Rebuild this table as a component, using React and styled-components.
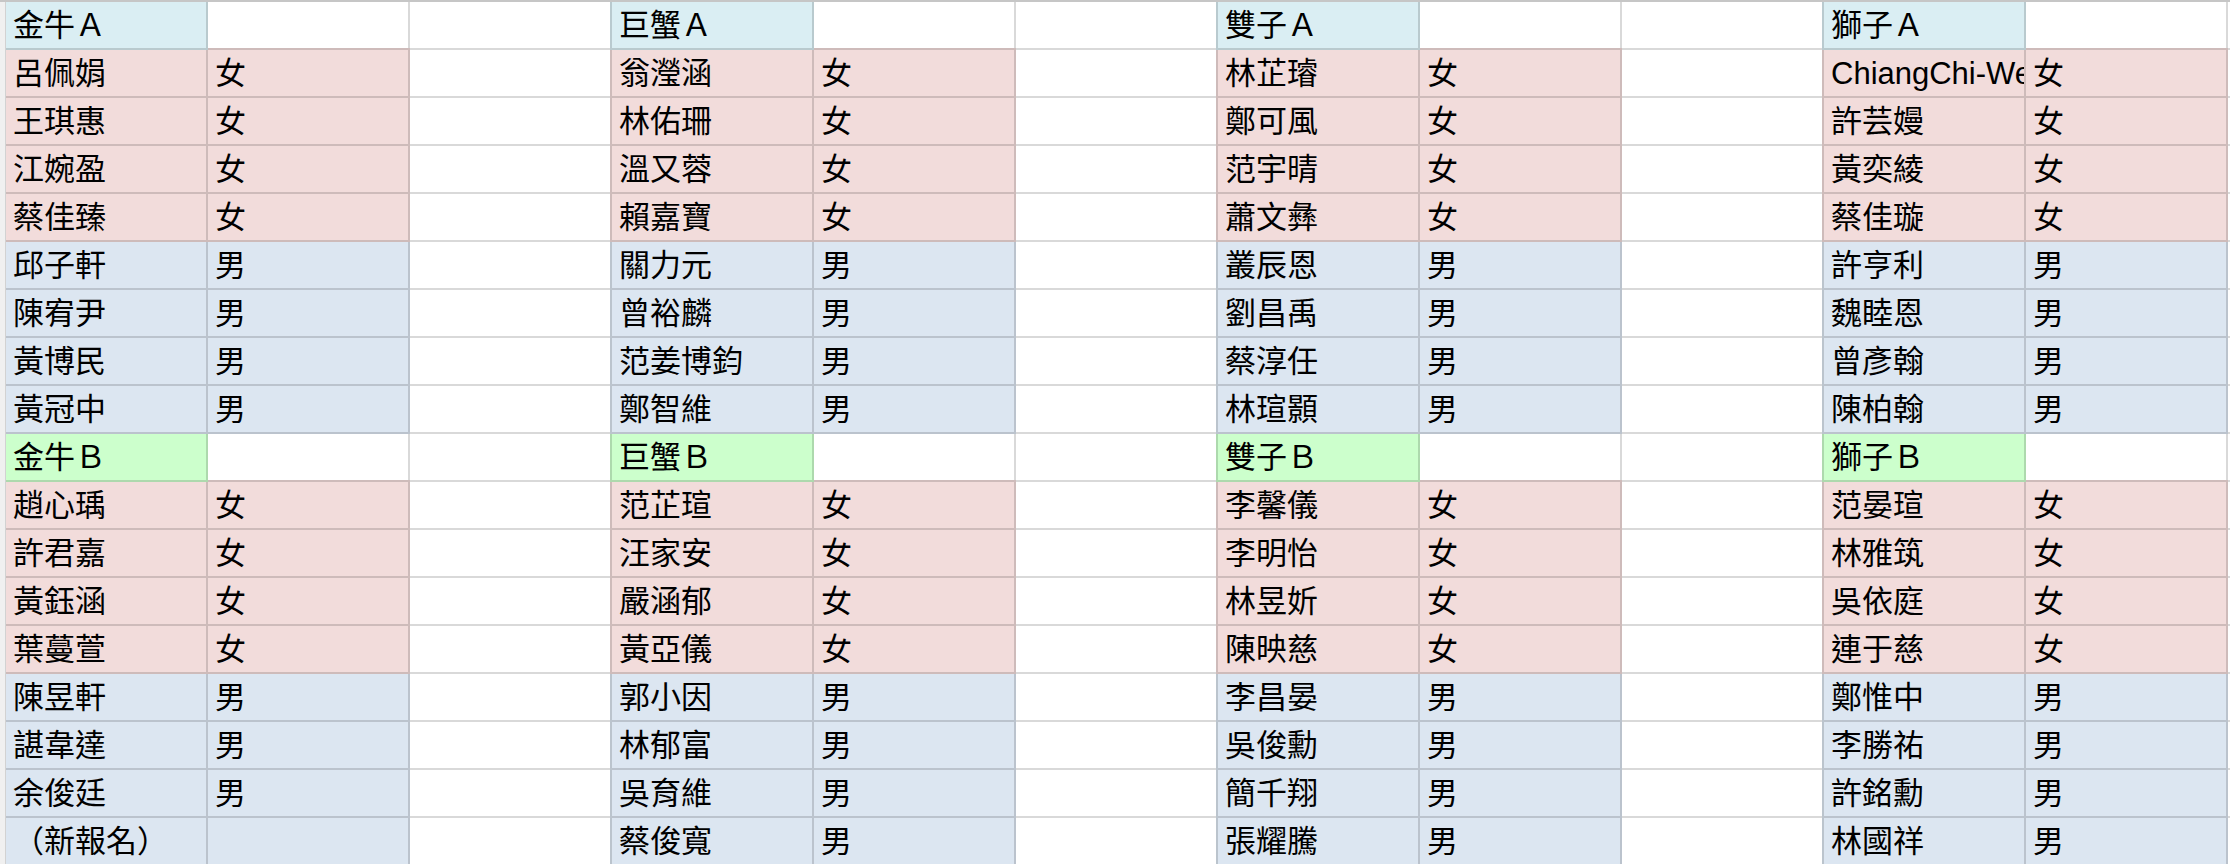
import React from 'react';
import styled, { createGlobalStyle, css } from 'styled-components';

const GlobalStyle = createGlobalStyle`
  html,
  body {
    margin: 0;
    padding: 0;
    background: #ffffff;
    overflow: hidden;
  }
  body {
    font-family: 'Liberation Sans', 'Noto Sans CJK TC', sans-serif;
  }
`;

const fills = {
  plain: '#ffffff',
  teamA: '#daeef3',
  teamB: '#ccffcc',
  girl: '#f2dcdb',
  boy: '#dce6f1',
};

// gridline drawn over a fill: the fill darkened by 15%
const tint = (hex) => {
  const n = parseInt(hex.slice(1), 16);
  const ch = [(n >> 16) & 255, (n >> 8) & 255, n & 255].map((v) => Math.round(v * 0.85));
  return `rgb(${ch.join(',')})`;
};

const Sheet = styled.div`
  display: flex;
  border-top: 2px solid #c6c6c6;
  width: 100vw;
  height: 100vh;
  box-sizing: border-box;
  overflow: hidden;
`;

const Gutter = styled.div`
  flex: 0 0 5px;
  background: #f0f0f0;
  border-right: 1px solid #d2d2d2;
`;

const Grid = styled.div`
  display: grid;
  grid-template-columns: repeat(12, 202px);
  grid-auto-rows: 48px;
  align-content: start;
`;

const Cell = styled.div`
  box-sizing: border-box;
  display: flex;
  align-items: center;
  padding-left: 7px;
  overflow: hidden;
  white-space: nowrap;
  font-size: 31px;
  line-height: 1;
  color: #000000;
  background: ${(p) => fills[p.$fill]};
  border-right: 2px solid rgba(0, 0, 0, 0.15);
  border-bottom: 2px solid rgba(0, 0, 0, 0.15);
  ${(p) =>
    (p.$coverLeft || p.$coverTop) &&
    css`
      box-shadow: ${p.$coverLeft ? -2 : 0}px ${p.$coverTop ? -2 : 0}px 0 0 ${tint(fills[p.$fill])};
    `}
`;

const teams = [
  {
    name: '金牛',
    a: [
      ['呂佩娟', '女'], ['王琪惠', '女'], ['江婉盈', '女'], ['蔡佳臻', '女'],
      ['邱子軒', '男'], ['陳宥尹', '男'], ['黃博民', '男'], ['黃冠中', '男'],
    ],
    b: [
      ['趙心瑀', '女'], ['許君嘉', '女'], ['黃鈺涵', '女'], ['葉蔓萱', '女'],
      ['陳昱軒', '男'], ['諶韋達', '男'], ['余俊廷', '男'], ['（新報名）', ''],
    ],
  },
  {
    name: '巨蟹',
    a: [
      ['翁瀅涵', '女'], ['林佑珊', '女'], ['溫又蓉', '女'], ['賴嘉寶', '女'],
      ['關力元', '男'], ['曾裕麟', '男'], ['范姜博鈞', '男'], ['鄭智維', '男'],
    ],
    b: [
      ['范芷瑄', '女'], ['汪家安', '女'], ['嚴涵郁', '女'], ['黃亞儀', '女'],
      ['郭小因', '男'], ['林郁富', '男'], ['吳育維', '男'], ['蔡俊寬', '男'],
    ],
  },
  {
    name: '雙子',
    a: [
      ['林芷璿', '女'], ['鄭可風', '女'], ['范宇晴', '女'], ['蕭文彝', '女'],
      ['叢辰恩', '男'], ['劉昌禹', '男'], ['蔡淳任', '男'], ['林瑄顥', '男'],
    ],
    b: [
      ['李馨儀', '女'], ['李明怡', '女'], ['林昱妡', '女'], ['陳映慈', '女'],
      ['李昌晏', '男'], ['吳俊勳', '男'], ['簡千翔', '男'], ['張耀騰', '男'],
    ],
  },
  {
    name: '獅子',
    a: [
      ['ChiangChi-Wei', '女'], ['許芸嫚', '女'], ['黃奕綾', '女'], ['蔡佳璇', '女'],
      ['許亨利', '男'], ['魏睦恩', '男'], ['曾彥翰', '男'], ['陳柏翰', '男'],
    ],
    b: [
      ['范晏瑄', '女'], ['林雅筑', '女'], ['吳依庭', '女'], ['連于慈', '女'],
      ['鄭惟中', '男'], ['李勝祐', '男'], ['許銘勳', '男'], ['林國祥', '男'],
    ],
  },
];

// one column of 18 rows per team: header A, 8 members, header B, 8 members
const teamRows = (team) => {
  const block = (label, fill, members) => [
    { name: `${team.name}${label}`, gender: '', fill, header: true },
    ...members.map(([name, gender], i) => ({ name, gender, fill: i < 4 ? 'girl' : 'boy' })),
  ];
  return [...block('Ａ', 'teamA', team.a), ...block('Ｂ', 'teamB', team.b)];
};

export default function App() {
  const columns = teams.map(teamRows);

  return (
    <>
      <GlobalStyle />
      <Sheet>
        <Gutter />
        <Grid>
          {columns[0].map((_, r) =>
            columns.map((rows, t) => {
              const row = rows[r];
              const above = rows[r - 1];
              return (
                <React.Fragment key={`${r}-${t}`}>
                  <Cell $fill={row.fill} $coverLeft={t > 0}>
                    {row.name}
                  </Cell>
                  <Cell
                    $fill={row.header ? 'plain' : row.fill}
                    $coverTop={!row.header && above && above.header}
                  >
                    {row.gender}
                  </Cell>
                  <Cell $fill="plain" />
                </React.Fragment>
              );
            })
          )}
        </Grid>
      </Sheet>
    </>
  );
}
